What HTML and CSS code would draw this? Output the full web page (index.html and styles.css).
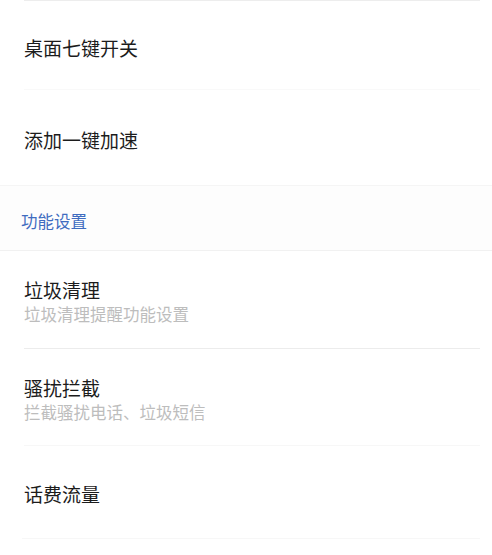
FILE: index.html
```html
<!DOCTYPE html>
<html lang="zh-CN">
<head>
<meta charset="utf-8">
<link rel="stylesheet" href="styles.css">
</head>
<body>
<div class="page">
  <div class="top-line"></div>
  <div class="row row-a">
    <div class="title">桌面七键开关</div>
  </div>
  <div class="row row-b">
    <div class="title">添加一键加速</div>
  </div>
  <div class="section">功能设置</div>
  <div class="row row-c">
    <div class="title">垃圾清理</div>
    <div class="sub">垃圾清理提醒功能设置</div>
  </div>
  <div class="row row-d">
    <div class="title">骚扰拦截</div>
    <div class="sub">拦截骚扰电话、垃圾短信</div>
  </div>
  <div class="row row-e">
    <div class="title">话费流量</div>
  </div>
</div>
</body>
</html>
```
FILE: styles.css
```css
html, body {
  margin: 0;
  padding: 0;
  background: #ffffff;
}
body {
  font-family: "Noto Sans CJK SC", "Noto Sans", sans-serif;
  width: 492px;
  height: 555px;
  overflow: hidden;
}
.page {
  display: flex;
  flex-direction: column;
}
.top-line {
  height: 1px;
  margin: 0 12px 0 24px;
  background: #ededed;
}
.row {
  display: flex;
  flex-direction: column;
  justify-content: center;
  padding: 0 12px 0 24px;
  box-sizing: border-box;
}
.title {
  font-size: 19px;
  line-height: 26px;
  color: #1c1c1c;
}
.sub {
  font-size: 16.5px;
  line-height: 22px;
  color: #bdbdbd;
  margin-top: 0;
}
.row-a {
  height: 89px;
  padding-top: 6px;
  border-bottom: 1px solid #f9f9f9;
  margin: 0 12px 0 24px;
  padding-left: 0;
  padding-right: 0;
}
.row-b {
  height: 95px;
  padding-top: 5px;
}
.section {
  height: 66px;
  box-sizing: border-box;
  border-top: 1px solid #f5f5f5;
  border-bottom: 1px solid #f1f1f1;
  background: #fdfdfd;
  color: #3f6cc0;
  font-size: 16.5px;
  line-height: 22px;
  padding: 24px 0 0 21px;
}
.row-c {
  height: 98px;
  padding-top: 2px;
  margin: 0 12px 0 24px;
  padding-left: 0;
  padding-right: 0;
  border-bottom: 1px solid #ececec;
}
.row-d {
  height: 97px;
  padding-top: 4px;
  margin: 0 12px 0 24px;
  padding-left: 0;
  padding-right: 0;
  border-bottom: 1px solid #f7f7f7;
}
.row-e {
  height: 93px;
  padding-top: 4px;
  margin: 0 12px 0 22px;
  padding-left: 2px;
  padding-right: 0;
  border-bottom: 1px solid #f7f7f7;
}
```
